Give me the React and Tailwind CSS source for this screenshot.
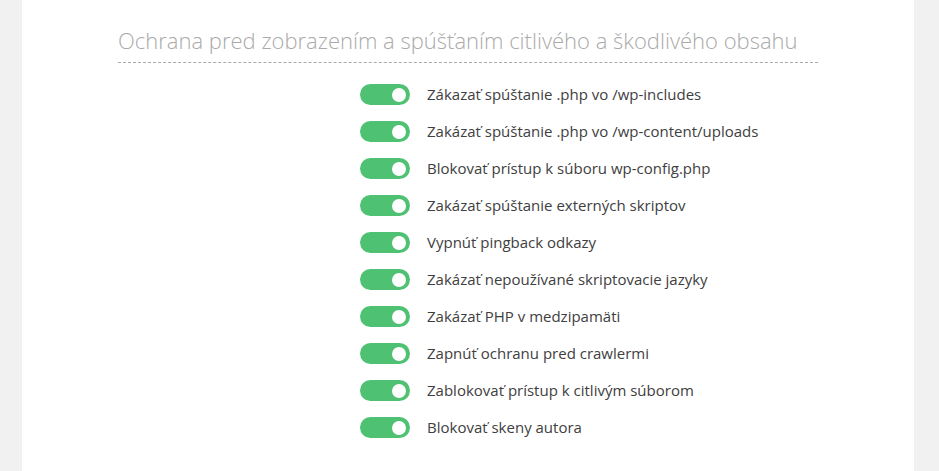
import React, { useState } from "react";

const options = [
  "Zákazať spúštanie .php vo /wp-includes",
  "Zakázať spúštanie .php vo /wp-content/uploads",
  "Blokovať prístup k súboru wp-config.php",
  "Zakázať spúštanie externých skriptov",
  "Vypnúť pingback odkazy",
  "Zakázať nepoužívané skriptovacie jazyky",
  "Zakázať PHP v medzipamäti",
  "Zapnúť ochranu pred crawlermi",
  "Zablokovať prístup k citlivým súborom",
  "Blokovať skeny autora",
];

function Toggle({ on, onClick }) {
  return (
    <button
      onClick={onClick}
      className={
        "relative w-[50px] h-[21px] rounded-full shrink-0 " +
        (on ? "bg-[#4fc172]" : "bg-[#cccccc]")
      }
    >
      <span
        className={
          "absolute top-[3.5px] w-[14px] h-[14px] rounded-full bg-white " +
          (on ? "right-[4px]" : "left-[4px]")
        }
      />
    </button>
  );
}

export default function App() {
  const [state, setState] = useState(options.map(() => true));

  return (
    <div
      className="min-h-[471px] bg-[#f1f1f1] flex"
      style={{ fontFamily: '"Open Sans", "Liberation Sans", sans-serif' }}
    >
      <div className="ml-[22px] w-[892px] bg-white pt-[25px] pb-[25px]">
        <div className="ml-[96px] w-[700px] border-b border-dashed border-[#aaaaaa] pb-[7px]">
          <h2 className="text-[22px] leading-[30px] font-light text-[#aaaaaa]">
            Ochrana pred zobrazením a spúšťaním citlivého a škodlivého obsahu
          </h2>
        </div>

        {/* Toggles */}
        <div className="mt-[13px] ml-[338px] flex flex-col">
          {options.map((label, i) => (
            <div key={i} className="h-[37px] flex items-center gap-[17px]">
              <Toggle
                on={state[i]}
                onClick={() =>
                  setState(state.map((v, j) => (j === i ? !v : v)))
                }
              />
              <span className="text-[15px] text-[#404040]">{label}</span>
            </div>
          ))}
        </div>
      </div>
    </div>
  );
}
